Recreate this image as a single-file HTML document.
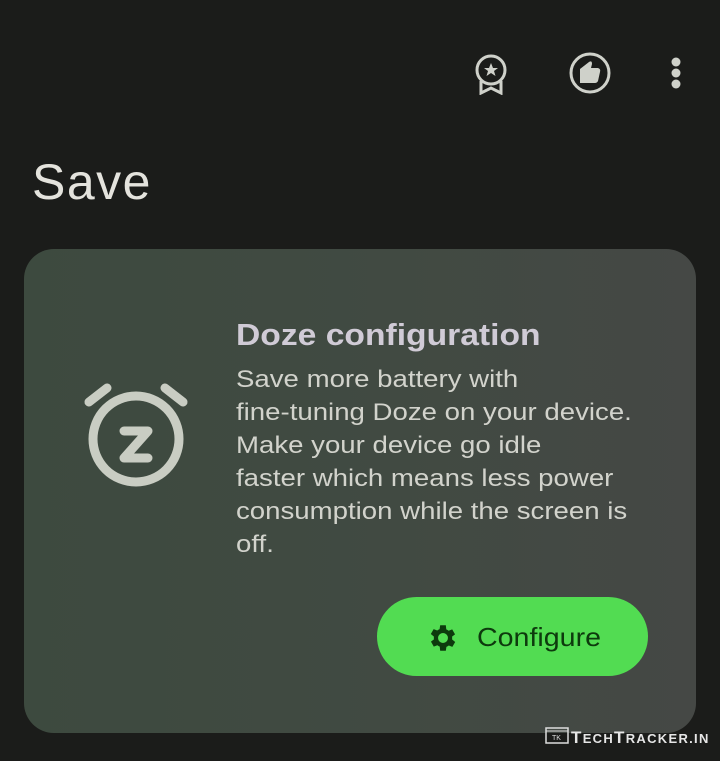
<!DOCTYPE html>
<html><head><meta charset="utf-8"><style>
html,body{margin:0;padding:0;width:720px;height:761px;background:#1b1c1a;overflow:hidden;font-family:"Liberation Sans",sans-serif}
.abs{position:absolute}
.card{left:24px;top:249px;width:672px;height:484px;border-radius:30px;background:linear-gradient(90deg,#3d4a3f 0%,#414a42 55%,#454845 100%)}
.title{left:236px;top:317px;font-size:31px;font-weight:bold;color:#d0cbd6;transform:scaleX(1.085);transform-origin:left}
.body{left:236px;top:363px;font-size:24px;line-height:33px;color:#d2d3cc;width:420px;transform:scaleX(1.15);transform-origin:left;white-space:nowrap}
.btn{left:377px;top:597px;width:271px;height:79px;border-radius:40px;background:#52dc52}
.btxt{left:477px;top:622px;font-size:26px;color:#0d3a0d;transform:scaleX(1.1);transform-origin:left}
</style></head><body>
<svg class="abs" style="left:472px;top:53px" width="38" height="42" viewBox="0 0 38 42">
<circle cx="19" cy="17" r="14" fill="none" stroke="#cfd1ca" stroke-width="3"/>
<polygon points="19,10 21,15 26,15 22,18 23.5,23 19,20 14.5,23 16,18 12,15 17,15" fill="#cfd1ca"/>
<path d="M9 28 V40 L19 35 L29 40 V28" fill="none" stroke="#cfd1ca" stroke-width="3"/>
</svg>
<svg class="abs" style="left:568px;top:51px" width="44" height="44" viewBox="0 0 44 44">
<circle cx="22" cy="22" r="19" fill="none" stroke="#cfd1ca" stroke-width="3"/>
<path d="M12 18 L21 11 Q24 9 24 13 L23 17 H30 Q33 18 32 21 L30 30 Q29 32 27 32 H12 Z" fill="#cfd1ca"/>
</svg>
<svg class="abs" style="left:668px;top:56px" width="16" height="36"><circle cx="8" cy="6" r="4.5" fill="#cfd1ca"/><circle cx="8" cy="17" r="4.5" fill="#cfd1ca"/><circle cx="8" cy="28" r="4.5" fill="#cfd1ca"/></svg>
<div class="abs" style="left:32px;top:153px;font-size:50px;color:#e4e3dd;letter-spacing:1.5px">Save</div>
<div class="abs card"></div>
<svg class="abs" style="left:80px;top:378px" width="112" height="115" viewBox="0 0 112 115">
<g stroke="#c9cdc3" stroke-linecap="round" fill="none">
<line x1="9" y1="24" x2="27" y2="10" stroke-width="9"/>
<line x1="103" y1="24" x2="85" y2="10" stroke-width="9"/>
<circle cx="56" cy="61" r="43" stroke-width="9"/>
<path d="M44 53 H68 L44 80 H68" stroke-width="9" stroke-linejoin="round"/>
</g></svg>
<div class="abs title">Doze configuration</div>
<div class="abs body">Save more battery with<br>fine-tuning Doze on your device.<br>Make your device go idle<br>faster which means less power<br>consumption while the screen is<br>off.</div>
<div class="abs btn"></div>
<svg class="abs" style="left:426px;top:621px" width="34" height="34" viewBox="0 0 24 24"><path fill="#0d3a0d" d="M19.4 13a7.5 7.5 0 0 0 0-2l2.1-1.6-2-3.5-2.5 1a7 7 0 0 0-1.7-1L15 3h-4l-.4 2.7a7 7 0 0 0-1.7 1l-2.5-1-2 3.5L6.6 11a7.5 7.5 0 0 0 0 2l-2.1 1.6 2 3.5 2.5-1a7 7 0 0 0 1.7 1L11 21h4l.4-2.7a7 7 0 0 0 1.7-1l2.5 1 2-3.5zM13 15.5a3.5 3.5 0 1 1 0-7 3.5 3.5 0 0 1 0 7z" transform="translate(-1 0)"/></svg>
<div class="abs btxt">Configure</div>
<svg class="abs" style="left:545px;top:727px" width="24" height="17"><rect x="1" y="1" width="22" height="15" fill="none" stroke="#ddd" stroke-width="1.5"/><line x1="1" y1="4" x2="23" y2="4" stroke="#ddd"/><text x="7" y="13" font-size="7" fill="#ddd" font-family="Liberation Sans">TK</text></svg>
<div class="abs" style="left:571px;top:728px;font-size:17px;color:#e6e6e6;letter-spacing:1.3px;font-weight:bold">T<span style="font-size:13px">ECH</span>T<span style="font-size:13px">RACKER.IN</span></div>
</body></html>
